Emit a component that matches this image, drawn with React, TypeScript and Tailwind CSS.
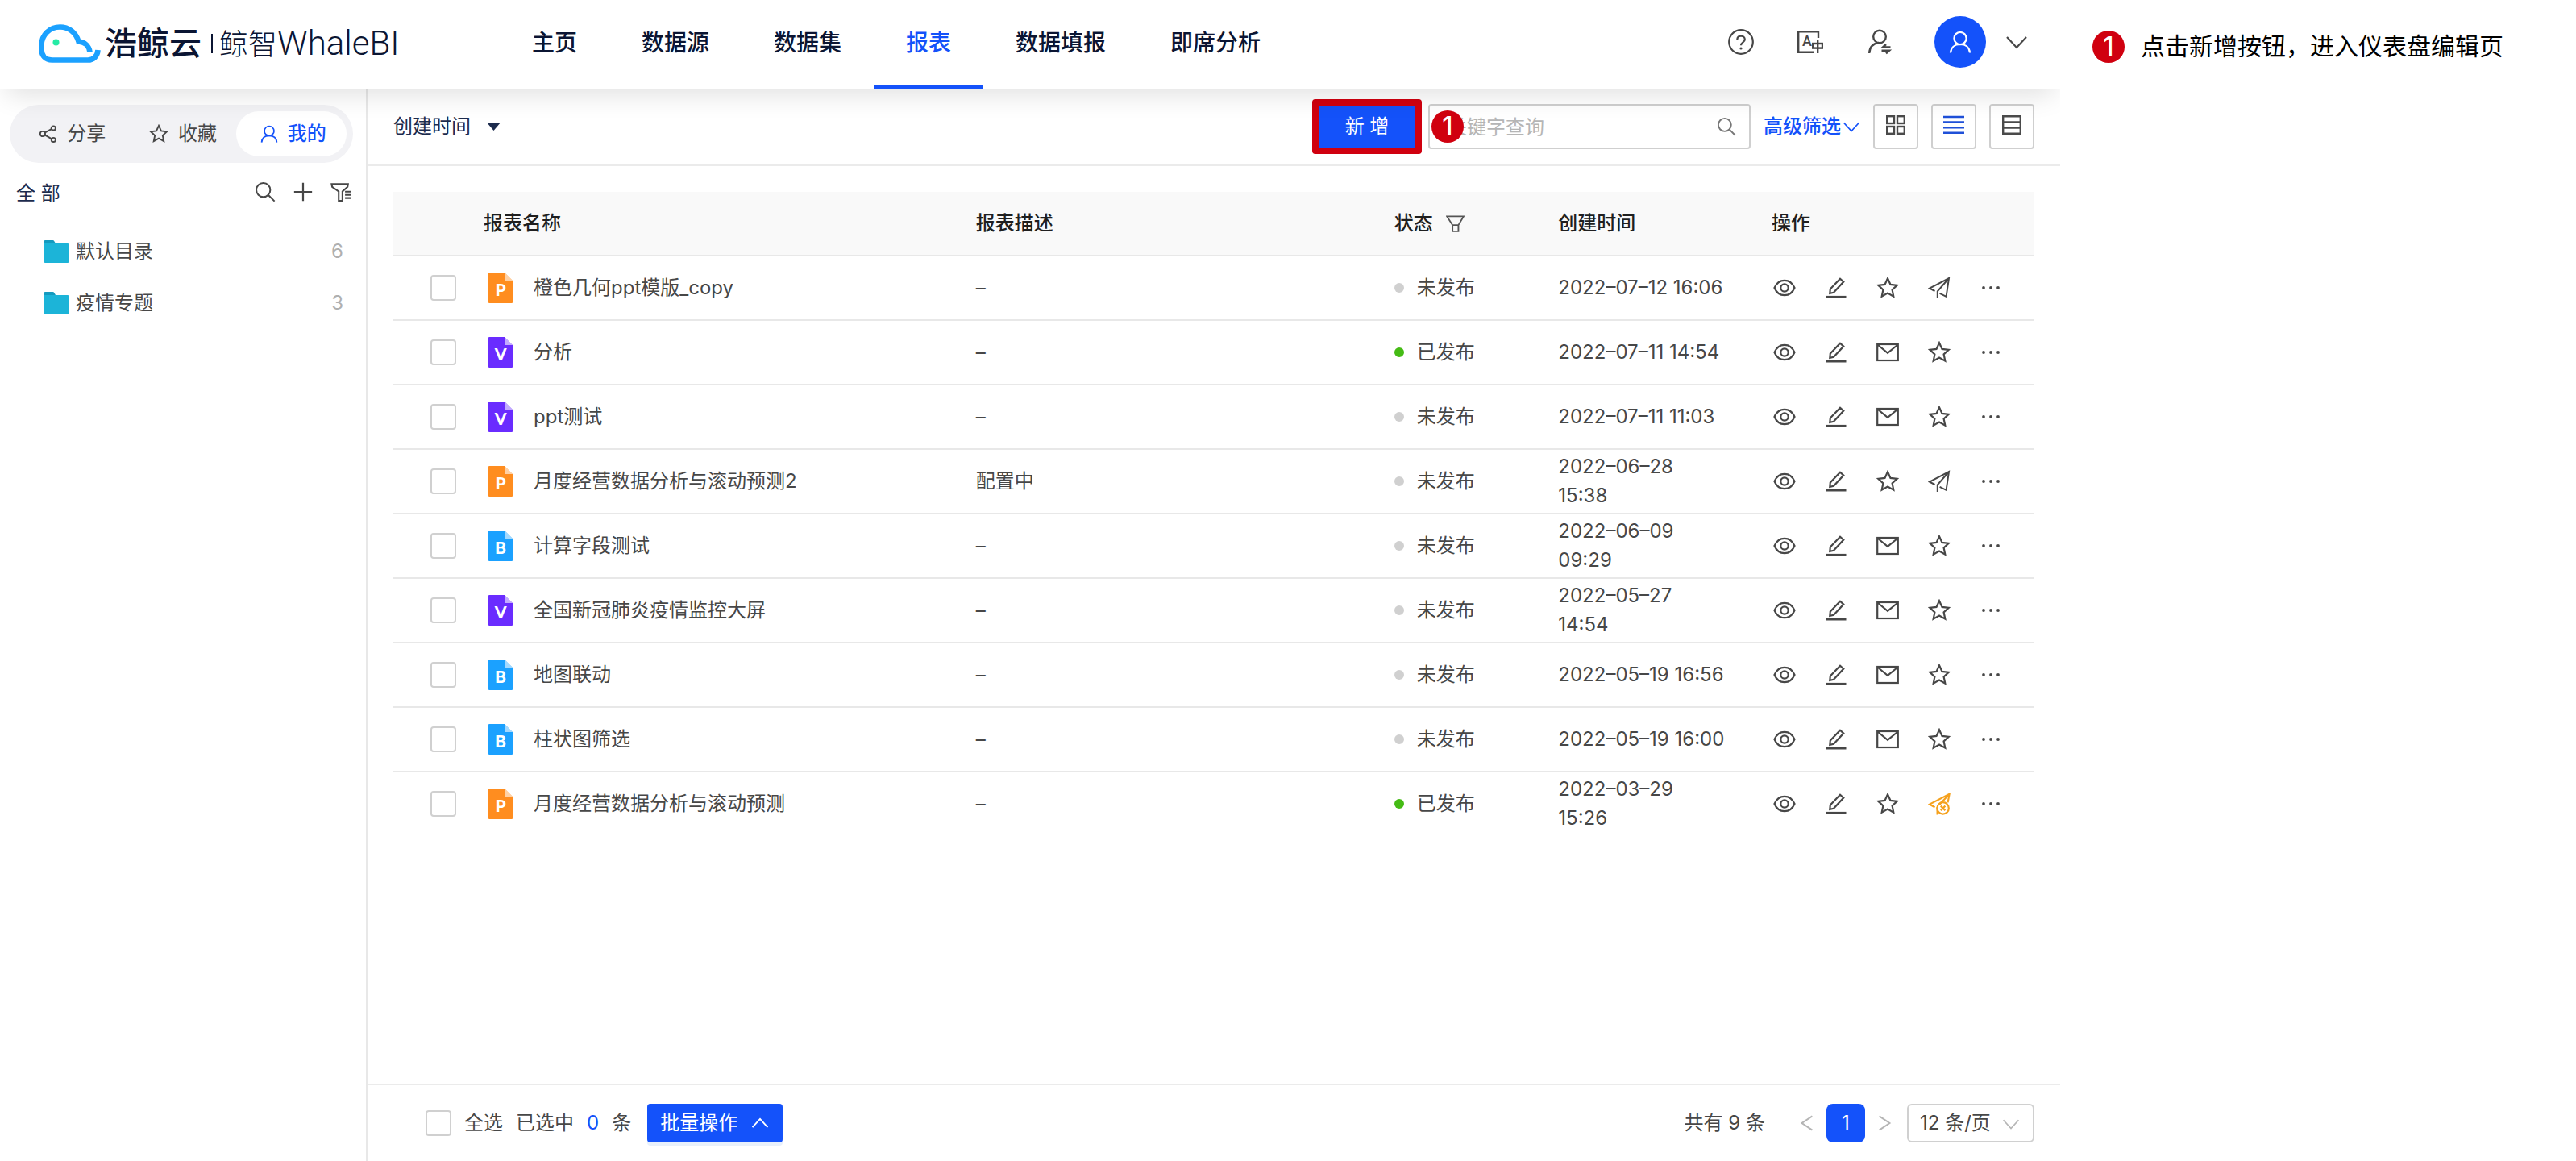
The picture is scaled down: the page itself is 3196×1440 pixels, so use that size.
import React from "react";

type Kind = "P" | "V" | "B";

interface Report {
  kind: Kind;
  name: string;
  desc: string;
  published: boolean;
  date: string;
  time: string;
  wrap?: boolean;
}

const NAV = ["主页", "数据源", "数据集", "报表", "数据填报", "即席分析"];

const REPORTS: Report[] = [
  { kind: "P", name: "橙色几何ppt模版_copy", desc: "–", published: false, date: "2022–07–12", time: "16:06" },
  { kind: "V", name: "分析", desc: "–", published: true, date: "2022–07–11", time: "14:54" },
  { kind: "V", name: "ppt测试", desc: "–", published: false, date: "2022–07–11", time: "11:03" },
  { kind: "P", name: "月度经营数据分析与滚动预测2", desc: "配置中", published: false, date: "2022–06–28", time: "15:38", wrap: true },
  { kind: "B", name: "计算字段测试", desc: "–", published: false, date: "2022–06–09", time: "09:29", wrap: true },
  { kind: "V", name: "全国新冠肺炎疫情监控大屏", desc: "–", published: false, date: "2022–05–27", time: "14:54", wrap: true },
  { kind: "B", name: "地图联动", desc: "–", published: false, date: "2022–05–19", time: "16:56" },
  { kind: "B", name: "柱状图筛选", desc: "–", published: false, date: "2022–05–19", time: "16:00" },
  { kind: "P", name: "月度经营数据分析与滚动预测", desc: "–", published: true, date: "2022–03–29", time: "15:26", wrap: true },
];

const FOLDERS = [
  { name: "默认目录", count: 6 },
  { name: "疫情专题", count: 3 },
];

const KIND_COLORS: Record<Kind, string> = {
  P: "#ff8d1f",
  V: "#6a2cff",
  B: "#1ba1ff",
};

/**
 * Shared 28x28 line icon
 */
function Icon(props: { children: React.ReactNode; className?: string; width?: number }) {
  return (
    <svg
      viewBox="0 0 28 28"
      fill="none"
      stroke="currentColor"
      strokeWidth={props.width ?? 2.2}
      aria-hidden="true"
      className={props.className ?? "size-7"}
    >
      {props.children}
    </svg>
  );
}

const EyeIcon = () => (
  <Icon>
    <path d="M1.5 14C4 8 8.5 4.8 14 4.8S24 8 26.5 14C24 20 19.5 23.2 14 23.2S4 20 1.5 14Z" />
    <circle cx="14" cy="14" r="4.7" />
  </Icon>
);

const PencilIcon = () => (
  <Icon>
    <path d="M1.5 25.2h25" strokeWidth="2.6" />
    <path d="M6.3 20.8l.5-5.3L19 2.8l4.3 3.8L11 19.8Z" />
  </Icon>
);

const StarIcon = (props: { className?: string }) => (
  <Icon className={props.className}>
    <path d="M14 2.2l3.5 7.7 8.2.9-6.1 5.6 1.7 8.2L14 20.6l-7.3 4 1.7-8.2-6.1-5.6 8.2-.9Z" />
  </Icon>
);

const MailIcon = () => (
  <Icon>
    <rect x="1.2" y="4" width="25.6" height="20" />
    <path d="M2 5l12 9.8L26 5" />
  </Icon>
);

const SendIcon = () => (
  <Icon width={2}>
    <path d="M8.5 18l-6.5-3.4L26 2l-3.4 22.8-8-4M26 2L11.8 18.4V27" />
  </Icon>
);

const SendOffIcon = () => (
  <Icon>
    <path d="M8.5 18.2L2 14.6 26.6 1.8l-2 10.6M26.6 1.8L14.5 14.8M11.6 18v9.6" />
    <circle cx="18.6" cy="19.4" r="7.2" />
    <path d="M15.8 16.6l5.6 5.6M21.4 16.6l-5.6 5.6" />
  </Icon>
);

const MoreIcon = () => (
  <Icon>
    <g fill="currentColor" stroke="none">
      <circle cx="5" cy="14" r="1.9" />
      <circle cx="14" cy="14" r="1.9" />
      <circle cx="23" cy="14" r="1.9" />
    </g>
  </Icon>
);

const SearchIcon = (props: { className?: string }) => (
  <Icon className={props.className}>
    <circle cx="11.5" cy="11.5" r="9.3" />
    <path d="M18 18l8.5 8.5" />
  </Icon>
);

const UserIcon = (props: { className?: string }) => (
  <Icon className={props.className}>
    <circle cx="14" cy="9.5" r="7.6" />
    <path d="M2 27.5C2.5 21 7 17 14 17s11.5 4 12 10.5" />
  </Icon>
);

const ChevronIcon = (props: { className?: string; up?: boolean }) => (
  <Icon className={props.className}>
    <path d={props.up ? "M3 20L14 8l11 12" : "M2 8l12 13L26 8"} />
  </Icon>
);

function FileIcon(props: { kind: Kind }) {
  return (
    <svg viewBox="0 0 30 38" className="h-[38px] w-[30px]" aria-hidden="true">
      <path d="M1 0h19l10 10v27a1 1 0 0 1-1 1H1a1 1 0 0 1-1-1V1a1 1 0 0 1 1-1Z" fill={KIND_COLORS[props.kind]} />
      <path d="M20 0l10 10H20Z" fill="#fff" fillOpacity="0.6" />
      <text
        x="15"
        y="29"
        textAnchor="middle"
        fill="#fff"
        fontSize="21"
        className="font-['Lato',sans-serif] font-black"
      >
        {props.kind}
      </text>
    </svg>
  );
}

function Checkbox(props: { label: string; id?: string }) {
  return (
    <input
      type="checkbox"
      id={props.id}
      aria-label={props.label}
      className="block size-8 shrink-0 appearance-none rounded border-2 border-[#d0d0d0] bg-white checked:bg-[#1452fa]"
    />
  );
}

function StepBadge(props: { className?: string }) {
  return (
    <span
      className={`flex size-10 shrink-0 items-center justify-center rounded-full bg-[#d0000f] text-[32px] leading-none font-medium text-white ${props.className ?? ""}`}
    >
      1
    </span>
  );
}

function Header() {
  return (
    <header className="relative z-10 flex h-[110px] shrink-0 items-center bg-white pr-10 pb-1.5 shadow-[0_16px_32px_-8px_rgba(0,0,0,0.12)]">
      <div className="flex w-[620px] shrink-0 items-center pt-1 pl-12 text-[#0b1533]">
        <svg viewBox="0 0 78 48" className="h-12 w-[78px]" fill="none" aria-hidden="true">
          <path
            d="M73.5 32C73 39.500 68 44.5 61 44.5H16.5C8.5 44.5 3.5 39 3.5 31V26C3.5 13 14 3.5 26.5 3.5C37 3.5 46 10 49.5 21.5C57 22 62.5 27 63.5 34.5"
            stroke="#1ba1ff"
            strokeWidth="6.6"
          />
          <circle cx="21.5" cy="22.5" r="4" fill="#25eba5" />
        </svg>
        <span className="ml-1 text-[40px] leading-none font-medium">浩鲸云</span>
        <span className="mr-2 ml-3 h-6 w-0.5 bg-[#0b1533]" />
        <span className="font-['Roboto','Noto_Sans_CJK_SC',sans-serif] text-4xl leading-none font-light">
          鲸智<span className="text-[42px]">WhaleBI</span>
        </span>
      </div>
      <nav className="flex">
        {NAV.map((item) => (
          <a
            key={item}
            href="#"
            className={
              item === "报表"
                ? "mt-1.5 border-b-4 border-[#1452fa] px-10 text-[28px] leading-[106px] font-medium text-[#1452fa]"
                : "mt-1.5 border-b-4 border-transparent px-10 text-[28px] leading-[106px] font-medium text-[#0b1533]"
            }
          >
            {item}
          </a>
        ))}
      </nav>
      <div className="ml-auto flex items-center text-[#474747]">
        <div className="flex items-center gap-[54px]">
          <button aria-label="帮助">
            <svg viewBox="0 0 32 32" className="size-8" fill="none" stroke="currentColor" strokeWidth="2.2">
              <circle cx="16" cy="16" r="14.8" />
              <path d="M11.3 13.2C11.3 10.3 13.2 8.7 16 8.7s4.8 1.7 4.8 4.2c0 3.4-4.8 3.6-4.8 7.3" />
              <circle cx="16" cy="24" r="1.6" fill="currentColor" stroke="none" />
            </svg>
          </button>
          <button aria-label="语言">
            <svg viewBox="0 0 32 32" className="size-8" fill="none" stroke="currentColor" strokeWidth="2.4">
              <path d="M26 11V3.2H1.2v25.6H21" />
              <rect x="19.2" y="18" width="11.8" height="5.6" />
              <path d="M25.2 14v16" />
              <text x="6" y="20.5" fontSize="18" fill="currentColor" stroke="none" className="font-['Roboto',sans-serif] font-medium">
                A
              </text>
            </svg>
          </button>
          <button aria-label="切换用户">
            <svg viewBox="0 0 32 32" className="size-8" fill="none" stroke="currentColor" strokeWidth="2.4">
              <circle cx="16" cy="9.5" r="7.8" />
              <path d="M3.2 30C3.5 22 8 18 15 17" />
              <path d="M29.5 22.5H20l4-3.5M18.5 26.8H28l-4 3.5" />
            </svg>
          </button>
        </div>
        <span className="ml-[52px] flex size-16 items-center justify-center rounded-full bg-[#1452fa] text-white">
          <UserIcon className="size-7" />
        </span>
        <button aria-label="展开" className="ml-6">
          <ChevronIcon className="size-7" />
        </button>
      </div>
    </header>
  );
}

function Sidebar() {
  return (
    <aside className="w-[456px] shrink-0 border-r-2 border-[#e8e8e8] pt-5 text-[#474747]">
      <div className="mr-4 ml-3 grid grid-cols-3 rounded-full bg-[#f2f2f5] p-2">
        <button className="flex h-14 items-center justify-center gap-3 pl-1">
          <Icon className="size-[22px]" width={2.4}>
            <circle cx="5" cy="14" r="4" />
            <circle cx="22" cy="5" r="3.3" />
            <circle cx="22" cy="23.5" r="3.3" />
            <path d="M8.8 12l10-5.5M8.8 16l10 5.8" />
          </Icon>
          分享
        </button>
        <button className="flex h-14 items-center justify-center gap-3 pl-1">
          <StarIcon className="size-6" />
          收藏
        </button>
        <button className="flex h-14 items-center justify-center gap-3 rounded-full bg-white pl-1 font-medium text-[#1452fa]">
          <UserIcon className="size-[22px]" />
          我的
        </button>
      </div>
      <div className="mt-1 mb-1.5 flex h-[68px] items-center pr-[18px] pl-5">
        <span className="text-[#1c2b4d]">全 部</span>
        <div className="ml-auto flex items-center gap-[22px] pb-1">
          <button aria-label="搜索">
            <SearchIcon className="size-[26px]" />
          </button>
          <button aria-label="新建">
            <Icon className="size-6">
              <path d="M14 1v26M1 14h26" strokeWidth="2.6" />
            </Icon>
          </button>
          <button aria-label="筛选">
            <Icon className="size-[26px]">
              <path d="M1.5 3.5h22l-.6 3.8-6.9 6.2v12.500h-5V13.5L2.3 7.3Z" />
              <path d="M19.5 13.8H27M19.5 18H27M19.5 22.2H27" />
            </Icon>
          </button>
        </div>
      </div>
      <ul>
        {FOLDERS.map((folder) => (
          <li key={folder.name}>
            <a href="#" className="flex h-16 items-center pr-7 pl-[54px]">
              <svg viewBox="0 0 32 28" className="mr-2 h-7 w-8" aria-hidden="true">
                <path d="M0 2a2 2 0 0 1 2-2h9.5a2 2 0 0 1 1.7 1L15.5 5H0Z" fill="#149abf" />
                <path d="M0 4h30a2 2 0 0 1 2 2v20a2 2 0 0 1-2 2H2a2 2 0 0 1-2-2Z" fill="#1cb4d8" />
              </svg>
              {folder.name}
              <span className="ml-auto text-[#b0b0b0]">{folder.count}</span>
            </a>
          </li>
        ))}
      </ul>
    </aside>
  );
}

function Toolbar() {
  const viewButton = "flex size-14 items-start justify-center rounded border-2 border-[#cfcfcf] bg-white pt-2.5";
  return (
    <div className="flex h-24 shrink-0 items-center gap-4 border-b-2 border-[#ebebeb] px-8">
      <button className="mr-auto flex items-center gap-5 text-[#1c2b4d]">
        创建时间
        <svg viewBox="0 0 17 10" className="h-2.5 w-[17px]" fill="currentColor" aria-hidden="true">
          <path d="M0 0h17L8.5 10Z" />
        </svg>
      </button>
      <div className="relative">
        <button className="h-14 w-[120px] bg-[#1452fa] text-white">新 增</button>
        <span className="pointer-events-none absolute -inset-x-2 -inset-y-1.5 rounded border-8 border-[#d0000f]" />
      </div>
      <div className="relative">
        <input
          type="text"
          aria-label="关键字查询"
          placeholder="关键字查询"
          className="block h-14 w-[400px] rounded border-2 border-[#cfcfcf] bg-white pr-14 pl-[22px] placeholder:text-[#b5b5b5]"
        />
        <SearchIcon className="absolute top-4 right-[18px] size-6 text-[#777777]" />
        <StepBadge className="absolute top-2 left-1" />
      </div>
      <button className="flex items-center gap-0.5 font-medium text-[#1452fa]">
        高级筛选
        <ChevronIcon className="size-[22px]" />
      </button>
      <button aria-label="卡片视图" className={`${viewButton} text-[#4a4a4a]`}>
        <Icon width={2.4}>
          <rect x="3.2" y="3.2" width="8.8" height="8.8" />
          <rect x="16" y="3.2" width="8.8" height="8.8" />
          <rect x="3.2" y="16" width="8.8" height="8.8" />
          <rect x="16" y="16" width="8.8" height="8.8" />
        </Icon>
      </button>
      <button aria-label="列表视图" className={`${viewButton} text-[#1f50d8]`}>
        <Icon width={2.4}>
          <path d="M1 4h26M1 10.5h26M1 17.2h26M1 23.8h26" />
        </Icon>
      </button>
      <button aria-label="紧凑视图" className={`${viewButton} text-[#4a4a4a]`}>
        <Icon width={2.4}>
          <path d="M3.2 3.2h21.6v21.6H3.2ZM3.2 10.4h21.6M3.2 17.6h21.6" />
        </Icon>
      </button>
    </div>
  );
}

function RowActions(props: { report: Report }) {
  const { kind, published } = props.report;
  const button = "flex size-8 items-center justify-center";
  return (
    <div className="flex gap-8">
      <button aria-label="查看" className={button}><EyeIcon /></button>
      <button aria-label="编辑" className={button}><PencilIcon /></button>
      {kind !== "P" && <button aria-label="邮件" className={button}><MailIcon /></button>}
      <button aria-label="收藏" className={button}><StarIcon /></button>
      {kind === "P" && !published && <button aria-label="发布" className={button}><SendIcon /></button>}
      {kind === "P" && published && (
        <button aria-label="取消发布" className={`${button} text-[#f5a11d]`}><SendOffIcon /></button>
      )}
      <button aria-label="更多" className={button}><MoreIcon /></button>
    </div>
  );
}

function ReportTable() {
  return (
    <table className="w-full table-fixed border-separate border-spacing-0 text-left leading-9">
      <colgroup>
        <col className="w-24" />
        <col className="w-[30%]" />
        <col />
        <col className="w-[10%]" />
        <col className="w-[13%]" />
        <col className="w-[342px]" />
      </colgroup>
      <thead>
        <tr className="h-20 bg-[#f9f9f9] text-[#1f1f1f] [&>th]:border-b-2 [&>th]:border-[#e8e8e8] [&>th]:px-4 [&>th]:font-medium">
          <th />
          <th>报表名称</th>
          <th>报表描述</th>
          <th>
            <span className="flex items-center gap-4">
              状态
              <Icon className="size-6 text-[#555555]">
                <path d="M1.5 4h24L18 16.500H9.500ZM9.500 16.500H18v9H9.500Z" />
              </Icon>
            </span>
          </th>
          <th>创建时间</th>
          <th>操作</th>
        </tr>
      </thead>
      <tbody>
        {REPORTS.map((report) => (
          <tr
            key={report.name}
            className="h-20 text-[#474747] last:[&>td]:border-transparent [&>td]:border-b-2 [&>td]:border-[#e8e8e8] [&>td]:px-4"
          >
            <td>
              <div className="pl-[30px]">
                <Checkbox label={report.name} />
              </div>
            </td>
            <td>
              <span className="flex items-center gap-[26px] pl-1.5">
                <FileIcon kind={report.kind} />
                {report.name}
              </span>
            </td>
            <td>{report.desc}</td>
            <td>
              <span className="flex items-center gap-4">
                <span className={report.published ? "size-3 rounded-full bg-[#45bb15]" : "size-3 rounded-full bg-[#d0d0d0]"} />
                {report.published ? "已发布" : "未发布"}
              </span>
            </td>
            <td>
              {report.date} {report.wrap && <br />}
              {report.time}
            </td>
            <td>
              <RowActions report={report} />
            </td>
          </tr>
        ))}
      </tbody>
    </table>
  );
}

function Footer() {
  return (
    <footer className="flex h-24 shrink-0 items-center border-t-2 border-[#ebebeb] pr-8 pl-[72px] text-[#474747]">
      <Checkbox label="全选" id="select-all" />
      <label htmlFor="select-all" className="ml-4">全选</label>
      <span className="ml-4">已选中</span>
      <span className="mx-4 text-[#1452fa]">0</span>
      <span>条</span>
      <button className="ml-5 flex h-12 w-[168px] items-center justify-between rounded bg-[#1452fa] px-4 text-white shadow-[0_4px_0_#e8f0fb]">
        批量操作
        <ChevronIcon up className="size-6" />
      </button>
      <span className="mr-[42px] ml-auto">共有 9 条</span>
      <button aria-label="上一页" className="text-[#b5b5b5]">
        <Icon className="size-5"><path d="M23 2L5 14l18 12" strokeWidth="2.8" /></Icon>
      </button>
      <button className="mx-3.5 size-12 rounded-lg bg-[#1452fa] text-white">1</button>
      <button aria-label="下一页" className="text-[#b5b5b5]">
        <Icon className="size-5"><path d="M5 2l18 12L5 26" strokeWidth="2.8" /></Icon>
      </button>
      <div className="relative ml-[18px]">
        <select aria-label="每页条数" className="block h-12 w-[158px] appearance-none rounded-md border-2 border-[#d0d0d0] bg-white pl-3.5">
          <option>12 条/页</option>
        </select>
        <ChevronIcon className="pointer-events-none absolute top-3.5 right-[18px] size-[22px] text-[#b5b5b5]" />
      </div>
    </footer>
  );
}

export default function App() {
  return (
    <div className="flex min-h-screen bg-white font-['Inter','Noto_Sans_CJK_SC',sans-serif] text-2xl">
      <div className="flex min-w-0 flex-1 flex-col overflow-hidden">
        <Header />
        <div className="flex flex-1">
          <Sidebar />
          <main className="flex min-w-0 flex-1 flex-col">
            <Toolbar />
            <div className="flex-1 p-8">
              <ReportTable />
            </div>
            <Footer />
          </main>
        </div>
      </div>
      <ol className="w-[640px] shrink-0 pt-[38px] pl-10">
        <li className="flex items-center gap-5 text-[30px] text-black">
          <StepBadge />
          点击新增按钮，进入仪表盘编辑页
        </li>
      </ol>
    </div>
  );
}
